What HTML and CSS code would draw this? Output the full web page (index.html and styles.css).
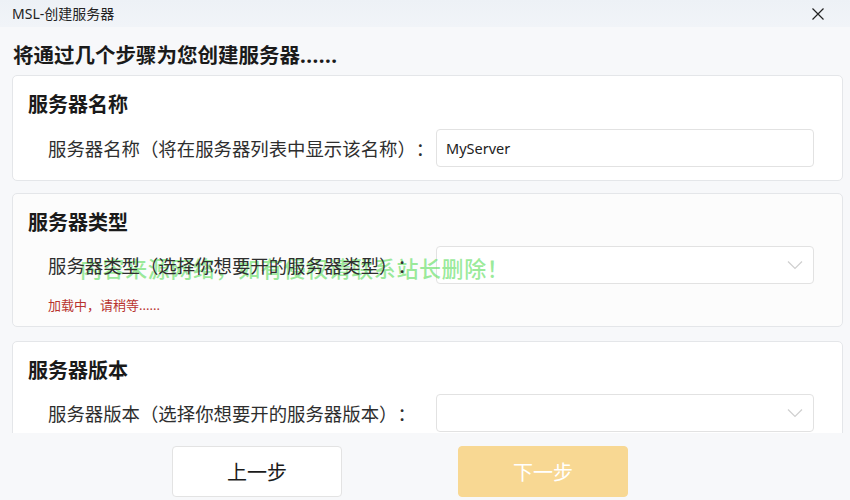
FILE: index.html
```html
<!DOCTYPE html>
<html lang="zh-CN">
<head>
<meta charset="utf-8">
<title>MSL-创建服务器</title>
<link rel="stylesheet" href="styles.css">
</head>
<body>
<div class="window">
  <div class="titlebar">
    <span class="title">MSL-创建服务器</span>
    <svg class="close" width="14" height="14" viewBox="0 0 14 14"><path d="M1.5 1.5 L12.5 12.5 M12.5 1.5 L1.5 12.5" stroke="#222" stroke-width="1.2" fill="none"/></svg>
  </div>
  <div class="main">
    <h1 class="heading">将通过几个步骤为您创建服务器<span class="dots">......</span></h1>
    <section class="card card-first">
      <h2 class="card-title">服务器名称</h2>
      <div class="row">
        <label class="label">服务器名称（将在服务器列表中显示该名称）：</label>
        <div class="field"><span class="value">MyServer</span></div>
      </div>
    </section>
    <section class="card card-dim">
      <h2 class="card-title">服务器类型</h2>
      <div class="row">
        <label class="label">服务器类型（选择你想要开的服务器类型）：</label>
        <div class="field select">
          <svg class="chev" width="16" height="10" viewBox="0 0 16 10"><path d="M1 1.5 L8 8.5 L15 1.5" stroke="#cfcfcf" stroke-width="1.2" fill="none"/></svg>
        </div>
      </div>
      <div class="loading">加载中，请稍等<span class="small-dots">......</span></div>
    </section>
    <section class="card card-last">
      <h2 class="card-title">服务器版本</h2>
      <div class="row">
        <label class="label">服务器版本（选择你想要开的服务器版本）：</label>
        <div class="field select">
          <svg class="chev" width="16" height="10" viewBox="0 0 16 10"><path d="M1 1.5 L8 8.5 L15 1.5" stroke="#cfcfcf" stroke-width="1.2" fill="none"/></svg>
        </div>
      </div>
    </section>
  </div>
  <div class="footer">
    <button class="btn btn-prev">上一步</button>
    <button class="btn btn-next">下一步</button>
  </div>
  <div class="watermark">内容来源网络，如有侵权请联系站长删除！</div>
</div>
</body>
</html>
```
FILE: styles.css
```css
* { box-sizing: border-box; }
html, body { margin: 0; padding: 0; }
body {
  width: 850px;
  height: 500px;
  overflow: hidden;
  font-family: "Noto Sans", "Noto Sans CJK SC", sans-serif;
  color: #1b1b1b;
  background: #f7f8fa;
  text-spacing-trim: space-all;
}
.window {
  position: relative;
  width: 850px;
  height: 500px;
  display: flex;
  flex-direction: column;
}
.titlebar {
  height: 27px;
  flex: none;
  display: flex;
  align-items: center;
  justify-content: space-between;
  padding: 0 25px 0 12px;
  background: linear-gradient(#edf1f6, #f1f4f8);
}
.title {
  font-size: 14px;
  color: #222;
  line-height: 1;
}
.close { display: block; }
.main {
  height: 406px;
  flex: none;
  overflow: hidden;
  padding: 13px 7px 0 12px;
  display: flex;
  flex-direction: column;
  gap: 12px;
}
.heading {
  height: 28px;
  margin: 0 0 -5px 1px;
  font-family: "Noto Sans CJK SC", sans-serif;
  font-size: 20.5px;
  line-height: 28px;
  font-weight: 700;
  color: #1a1a1a;
  flex: none;
}
.dots {
  font-family: "Noto Sans", sans-serif;
  letter-spacing: 0.5px;
  line-height: 1;
}
.card {
  flex: none;
  background: #fff;
  border: 1px solid #e4e6e9;
  border-radius: 5px;
  padding: 15px 28px 12px 15px;
}
.card-first { padding-top: 15px; padding-bottom: 13px; }
.card-dim { background: #fcfcfc; padding-bottom: 12px; }
.card-last { margin-top: 2px; }
.card-title {
  margin: 0;
  font-family: "Noto Sans CJK SC", sans-serif;
  font-size: 20px;
  line-height: 26px;
  font-weight: 700;
  color: #1a1a1a;
}
.card-first .row { margin-top: 12px; }
.row {
  margin-top: 11px;
  display: flex;
  align-items: center;
  justify-content: space-between;
  padding-left: 20px;
}
.label {
  position: relative;
  z-index: 2;
  font-family: "Noto Sans CJK SC", sans-serif;
  font-size: 18.4px;
  color: #2e2e2e;
}
.field {
  width: 378px;
  height: 38px;
  border: 1px solid #e2e2e2;
  border-radius: 4px;
  background: #fff;
  display: flex;
  align-items: center;
  padding: 0 9px;
}
.select { justify-content: flex-end; padding-right: 10px; }
.value {
  font-family: "Noto Sans", sans-serif;
  font-size: 14.5px;
  color: #222;
}
.chev { display: block; }
.loading {
  margin: 12px 0 0 20px;
  font-family: "Noto Sans CJK SC", sans-serif;
  font-size: 13px;
  line-height: 18px;
  height: 18px;
  color: #b8332f;
}
.small-dots {
  font-family: "Noto Sans", sans-serif;
  line-height: 1;
}
.footer {
  flex: 1;
  display: flex;
  align-items: flex-start;
  padding: 13px 0 0 172px;
  gap: 116px;
}
.btn {
  width: 170px;
  height: 51px;
  border-radius: 4px;
  font-family: "Noto Sans CJK SC", sans-serif;
  font-size: 20px;
  cursor: pointer;
}
.btn-prev {
  background: #fff;
  border: 1px solid #e3e3e3;
  color: #1b1b1b;
}
.btn-next {
  background: #f8d893;
  border: 1px solid #f8d893;
  color: #fff;
}
.watermark {
  position: absolute;
  z-index: 1;
  left: 80px;
  top: 253px;
  font-family: "Noto Sans CJK SC", sans-serif;
  font-size: 22px;
  line-height: 28px;
  letter-spacing: 0.6px;
  font-weight: 500;
  color: rgba(110, 225, 110, 0.7);
  pointer-events: none;
  white-space: nowrap;
}
```
